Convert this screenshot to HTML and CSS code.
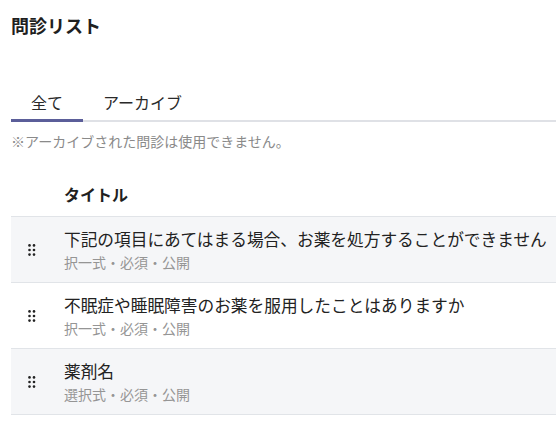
FILE: index.html
```html
<!DOCTYPE html>
<html lang="ja">
<head>
<meta charset="utf-8">
<title>問診リスト</title>
<link rel="stylesheet" href="styles.css">
</head>
<body>
<div class="page">
  <h1 class="title">問診リスト</h1>
  <div class="tabs">
    <div class="tab active">全て</div>
    <div class="tab">アーカイブ</div>
  </div>
  <p class="note">※アーカイブされた問診は使用できません。</p>
  <div class="table">
    <div class="thead">
      <div class="th-handle"></div>
      <div class="th-title">タイトル</div>
    </div>
    <div class="row">
      <div class="handle"><svg width="8" height="12" viewBox="0 0 8 12"><circle cx="1.5" cy="1.4" r="1.3"/><circle cx="6" cy="1.4" r="1.3"/><circle cx="1.5" cy="6" r="1.3"/><circle cx="6" cy="6" r="1.3"/><circle cx="1.5" cy="10.6" r="1.3"/><circle cx="6" cy="10.6" r="1.3"/></svg></div>
      <div class="cell">
        <div class="main">下記の項目にあてはまる場合、お薬を処方することができません</div>
        <div class="sub">択一式・必須・公開</div>
      </div>
    </div>
    <div class="row">
      <div class="handle"><svg width="8" height="12" viewBox="0 0 8 12"><circle cx="1.5" cy="1.4" r="1.3"/><circle cx="6" cy="1.4" r="1.3"/><circle cx="1.5" cy="6" r="1.3"/><circle cx="6" cy="6" r="1.3"/><circle cx="1.5" cy="10.6" r="1.3"/><circle cx="6" cy="10.6" r="1.3"/></svg></div>
      <div class="cell">
        <div class="main">不眠症や睡眠障害のお薬を服用したことはありますか</div>
        <div class="sub">択一式・必須・公開</div>
      </div>
    </div>
    <div class="row">
      <div class="handle"><svg width="8" height="12" viewBox="0 0 8 12"><circle cx="1.5" cy="1.4" r="1.3"/><circle cx="6" cy="1.4" r="1.3"/><circle cx="1.5" cy="6" r="1.3"/><circle cx="6" cy="6" r="1.3"/><circle cx="1.5" cy="10.6" r="1.3"/><circle cx="6" cy="10.6" r="1.3"/></svg></div>
      <div class="cell">
        <div class="main">薬剤名</div>
        <div class="sub">選択式・必須・公開</div>
      </div>
    </div>
  </div>
</div>
</body>
</html>
```
FILE: styles.css
```css
* { box-sizing: border-box; }
html, body {
  margin: 0;
  padding: 0;
  background: #fff;
}
body {
  font-family: "Noto Sans CJK JP", "Noto Sans", sans-serif;
  color: #222;
  overflow: hidden;
}
.page {
  padding: 13px 0 0 11px;
}
.title {
  margin: 0;
  font-size: 18px;
  line-height: 24px;
  font-weight: 700;
  color: #1f1f1f;
}
.tabs {
  display: flex;
  margin-top: 45px;
  box-shadow: inset 0 -2px 0 #dfe1e6;
}
.tab {
  padding: 8px 20px 5px;
  font-size: 16px;
  line-height: 24px;
  color: #2a2a2a;
  border-bottom: 3px solid transparent;
}
.tab.active {
  border-bottom-color: #5b5e99;
}
.note {
  margin: 9px 0 0;
  font-size: 14px;
  line-height: 20px;
  color: #8a8a8a;
}
.table {
  margin-top: 31px;
}
.thead {
  display: flex;
  padding-bottom: 10px;
  border-bottom: 1px solid #e1e4e8;
}
.th-handle {
  width: 53px;
}
.th-title {
  font-size: 16px;
  line-height: 24px;
  font-weight: 700;
  color: #1f1f1f;
}
.row {
  display: flex;
  align-items: center;
  padding: 10px 0;
  border-bottom: 1px solid #e1e4e8;
  white-space: nowrap;
}
.row:nth-child(even) {
  background: #f5f6f8;
}
.handle {
  width: 53px;
  display: flex;
  padding-left: 16.5px;
}
.handle svg {
  display: block;
  fill: #222;
}
.main {
  font-size: 16.7px;
  line-height: 25px;
  color: #222;
}
.sub {
  font-size: 14px;
  line-height: 20px;
  color: #959595;
}
```
